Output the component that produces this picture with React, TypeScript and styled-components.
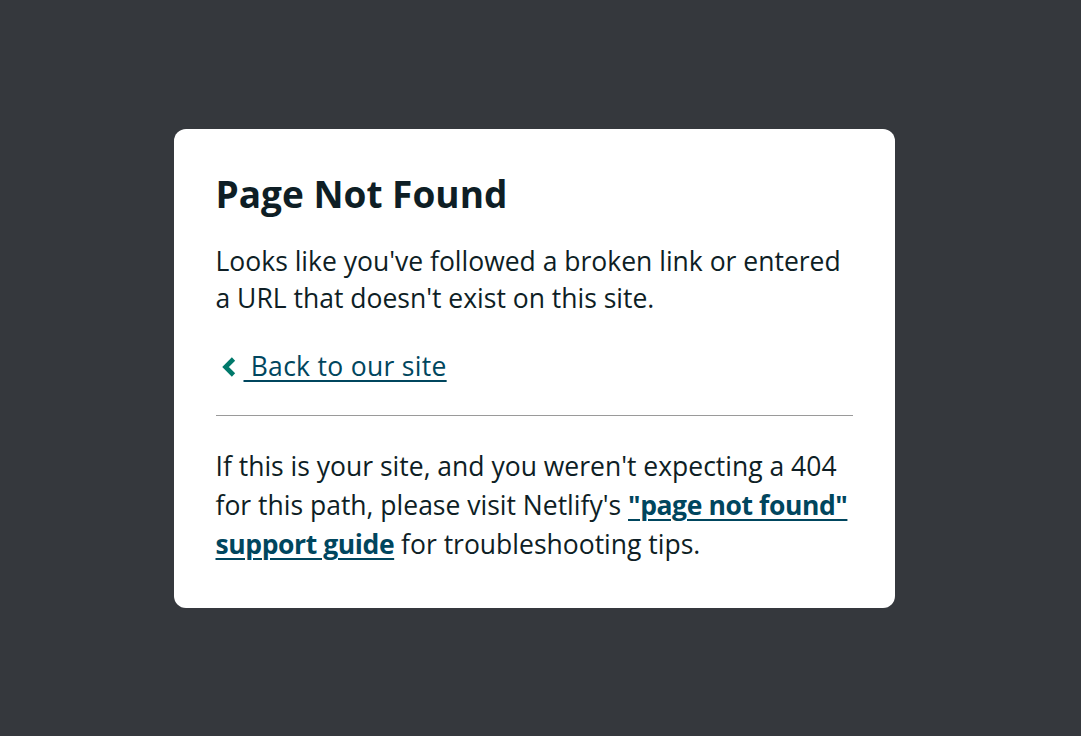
import React from 'react'
import styled, { createGlobalStyle } from 'styled-components'

const GlobalStyle = createGlobalStyle`
    html, body {
        margin: 0;
        padding: 0;
        background: #35383d;
    }
    body {
        font-family: 'Open Sans', 'Noto Sans', sans-serif;
        color: #0e1e25;
    }
`

export default function App(): JSX.Element {
    return (
        <>
            <GlobalStyle />
            <Page>
                <Card>
                    <Title>Page Not Found</Title>
                    <Text>
                        Looks like you've followed a broken link or entered a
                        URL that doesn't exist on this site.
                    </Text>
                    <BackRow>
                        <BackLink href="#">
                            <Chevron viewBox="0 0 14 20" aria-hidden="true">
                                <path
                                    d="M11.5 2 L3.5 10 L11.5 18"
                                    fill="none"
                                    stroke="currentColor"
                                    strokeWidth="4.6"
                                    strokeLinejoin="miter"
                                />
                            </Chevron>
                            {' Back to our site'}
                        </BackLink>
                    </BackRow>
                    <Divider />
                    <Footnote>
                        If this is your site, and you weren't expecting a 404
                        for this path, please visit Netlify's{' '}
                        <StrongLink href="#">"page not found" support guide</StrongLink>{' '}
                        for troubleshooting tips.
                    </Footnote>
                </Card>
            </Page>
        </>
    )
}

const Page = styled.main`
    display: flex;
    justify-content: center;
    padding-top: 129px;
    padding-right: 13px;
`

const Card = styled.div`
    display: flex;
    flex-direction: column;
    width: 721px;
    box-sizing: border-box;
    padding: 43px 42px 44px 42px;
    background: #ffffff;
    border-radius: 12px;
`

const Title = styled.h1`
    margin: 0 0 27px 0;
    font-size: 37px;
    line-height: 44px;
    font-weight: 700;
    color: #0e1e25;
`

const Text = styled.p`
    margin: 0;
    font-size: 26.5px;
    line-height: 37px;
    color: #0e1e25;
`

const Footnote = styled(Text)`
    line-height: 39px;
`

const BackRow = styled(Text)`
    margin-top: 31px;
`

const BackLink = styled.a`
    color: #00465e;
    text-decoration: underline;
    text-decoration-thickness: 2px;
    text-underline-offset: 4px;
    white-space: pre;
    letter-spacing: 0.3px;
`

const Chevron = styled.svg`
    display: inline-block;
    width: 14px;
    height: 20px;
    margin: 0 8px 0 6px;
    vertical-align: -1px;
    color: #00796b;
`

const Divider = styled.hr`
    width: 100%;
    margin: 30px 0 31px 0;
    border: 0;
    border-top: 1px solid #9a9a9a;
    height: 0;
`

const StrongLink = styled.a`
    font-weight: 700;
    letter-spacing: -0.4px;
    color: #00465e;
    text-decoration: underline;
    text-decoration-thickness: 2px;
    text-underline-offset: 4px;
`
